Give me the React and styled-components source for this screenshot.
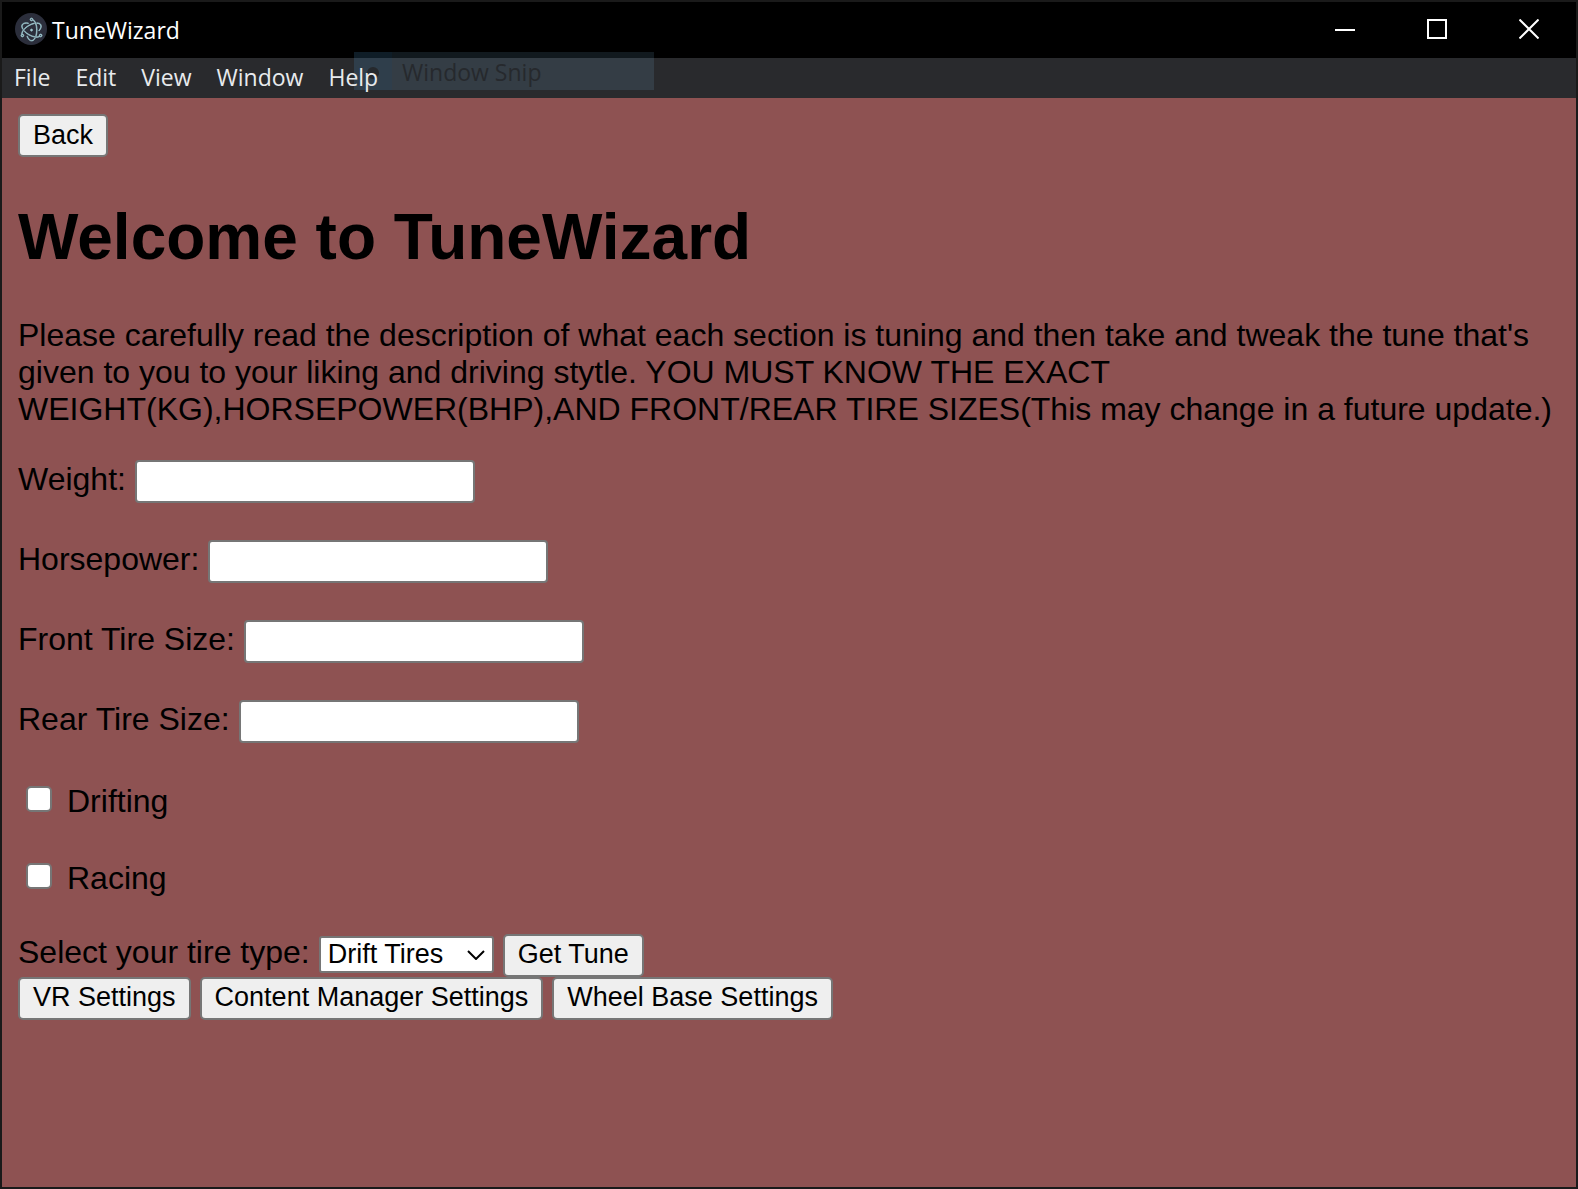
import React from "react";
import styled, { createGlobalStyle } from "styled-components";
import { SiElectron } from "react-icons/si";

const GlobalStyle = createGlobalStyle`
  *, *::before, *::after { box-sizing: border-box; }
  body { margin: 0; background: #8e5252; }
`;

const uiFont = `"Open Sans", "Noto Sans", sans-serif`;
const pageFont = `"Liberation Sans", Arial, sans-serif`;

const AppWindow = styled.div`
  position: relative;
  display: flex;
  flex-direction: column;
  min-height: 100vh;
  border: 2px solid #1a1a1a;
  background: #8e5252;
  color: #000;
  font-family: ${pageFont};
`;

const TitleBar = styled.header`
  display: flex;
  align-items: center;
  height: 56px;
  padding: 0 1px 2px 13px;
  background: #000;
`;

const Logo = styled.span`
  display: flex;
  align-items: center;
  justify-content: center;
  width: 32px;
  height: 32px;
  border-radius: 50%;
  background: #2b2e3b;
  color: #9fc9d1;

  svg {
    stroke: currentColor;
    stroke-width: 0.7;
    overflow: visible;
  }
`;

const AppName = styled.span`
  flex: 1;
  margin-left: 5px;
  padding-top: 2px;
  color: #fff;
  font: 23px/32px ${uiFont};
`;

const WindowButton = styled.button`
  display: flex;
  align-items: center;
  justify-content: center;
  width: 92px;
  height: 54px;
  padding: 0;
  border: 0;
  background: transparent;
  color: #fff;
`;

const MenuBar = styled.nav`
  display: flex;
  align-items: flex-start;
  gap: 25px;
  height: 40px;
  padding: 0 12px;
  background: #292a2d;
`;

const MenuItem = styled.button`
  position: relative;
  z-index: 1;
  padding: 0;
  border: 0;
  background: transparent;
  color: #e8eaed;
  font: 23px/38px ${uiFont};
`;

const SnipHint = styled.div`
  position: absolute;
  top: 50px;
  left: 352px;
  display: flex;
  width: 300px;
  height: 38px;
  background: rgba(135, 195, 235, 0.13);
  color: #26292d;
  font: 23px/40px ${uiFont};
  pointer-events: none;
`;

const SnipMark = styled.span`
  display: flex;
  align-items: center;
  justify-content: center;
  width: 38px;
  margin-right: 10px;
  background: rgba(0, 80, 150, 0.08);

  &::before {
    content: "";
    width: 12px;
    height: 12px;
    margin-top: 4px;
    border-radius: 50%;
    background: #26292d;
  }
`;

const Page = styled.main`
  flex: 1;
  padding: 16px;
`;

const Button = styled.button`
  height: 43px;
  padding: 0 13px 2px;
  border: 2px solid #767676;
  border-radius: 5px;
  background: #efefef;
  color: #000;
  font: 27px/36px ${pageFont};
`;

const Heading = styled.h1`
  margin: 43px 0;
  font-size: 64px;
  line-height: 74px;
`;

const Intro = styled.p`
  margin: 0 0 32px;
  font-size: 32px;
  line-height: 37px;
`;

const Field = styled.div`
  display: flex;
  align-items: flex-start;
  gap: 9px;
  margin-bottom: 37px;
`;

const Label = styled.label`
  font-size: 32px;
  line-height: 39px;
`;

const TextInput = styled.input`
  width: 340px;
  height: 43px;
  padding: 2px 4px;
  border: 2px solid #767676;
  border-radius: 4px;
  background: #fff;
  font: 27px/31px ${pageFont};
`;

const Choices = styled.div`
  display: flex;
  flex-direction: column;
  gap: 40px;
  padding: 3px 0 36px 8px;
`;

const Choice = styled.div`
  display: flex;
  align-items: center;
  gap: 15px;
  height: 37px;
`;

const Checkbox = styled.input`
  appearance: none;
  width: 26px;
  height: 26px;
  margin: 0 0 5px;
  border: 2px solid #767676;
  border-radius: 5px;
  background: #fff;

  &:checked {
    background: #0075ff;
  }
`;

const Row = styled.div`
  display: flex;
  align-items: baseline;
  gap: 9px;
`;

const SelectBox = styled.span`
  display: grid;
  align-items: baseline;

  & > * {
    grid-area: 1 / 1;
  }

  svg {
    align-self: center;
    justify-self: end;
    margin-right: 9px;
    pointer-events: none;
  }
`;

const Select = styled.select`
  appearance: none;
  width: 175px;
  height: 37px;
  padding: 0 0 0 7px;
  border: 2px solid #767676;
  border-radius: 3px;
  background: #fff;
  color: #000;
  font: 27px/31px ${pageFont};
`;

const fields = [
  { id: "weight", label: "Weight:" },
  { id: "horsepower", label: "Horsepower:" },
  { id: "front-tire", label: "Front Tire Size:" },
  { id: "rear-tire", label: "Rear Tire Size:" },
];

const choices = [
  { id: "drifting", label: "Drifting" },
  { id: "racing", label: "Racing" },
];

export default function App() {
  return (
    <>
      <GlobalStyle />
      <AppWindow>
        <TitleBar>
          <Logo>
            <SiElectron size={23} />
          </Logo>
          <AppName>TuneWizard</AppName>
          <WindowButton aria-label="Minimize">
            <svg width="20" height="20" stroke="currentColor" strokeWidth="2">
              <path d="M0 11H20" />
            </svg>
          </WindowButton>
          <WindowButton aria-label="Maximize">
            <svg width="20" height="20" fill="none" stroke="currentColor" strokeWidth="2">
              <path d="M1 1H19V19H1Z" />
            </svg>
          </WindowButton>
          <WindowButton aria-label="Close">
            <svg width="20" height="20" stroke="currentColor" strokeWidth="2">
              <path d="M0.5 0.5L19.5 19.5M19.5 0.5L0.5 19.5" />
            </svg>
          </WindowButton>
        </TitleBar>
        <MenuBar>
          {["File", "Edit", "View", "Window", "Help"].map((name) => (
            <MenuItem key={name}>{name}</MenuItem>
          ))}
        </MenuBar>
        <SnipHint>
          <SnipMark />
          Window Snip
        </SnipHint>
        <Page>
          <Row>
            <Button>Back</Button>
          </Row>
          <Heading>Welcome to TuneWizard</Heading>
          <Intro>
            Please carefully read the description of what each section is tuning and then take and
            tweak the tune that's given to you to your liking and driving stytle. YOU MUST KNOW THE
            EXACT WEIGHT(KG),HORSEPOWER(BHP),AND FRONT/REAR TIRE SIZES(This may change in a future
            update.)
          </Intro>
          {fields.map(({ id, label }) => (
            <Field key={id}>
              <Label htmlFor={id}>{label}</Label>
              <TextInput id={id} type="text" />
            </Field>
          ))}
          <Choices>
            {choices.map(({ id, label }) => (
              <Choice key={id}>
                <Checkbox id={id} type="checkbox" />
                <Label htmlFor={id}>{label}</Label>
              </Choice>
            ))}
          </Choices>
          <Row>
            <Label htmlFor="tire-type">Select your tire type:</Label>
            <SelectBox>
              <Select id="tire-type" defaultValue="Drift Tires">
                <option>Drift Tires</option>
              </Select>
              <svg width="18" height="10" fill="none" stroke="#000" strokeWidth="2">
                <path d="M1 1L9 9L17 1" />
              </svg>
            </SelectBox>
            <Button>Get Tune</Button>
          </Row>
          <Row>
            <Button>VR Settings</Button>
            <Button>Content Manager Settings</Button>
            <Button>Wheel Base Settings</Button>
          </Row>
        </Page>
      </AppWindow>
    </>
  );
}
